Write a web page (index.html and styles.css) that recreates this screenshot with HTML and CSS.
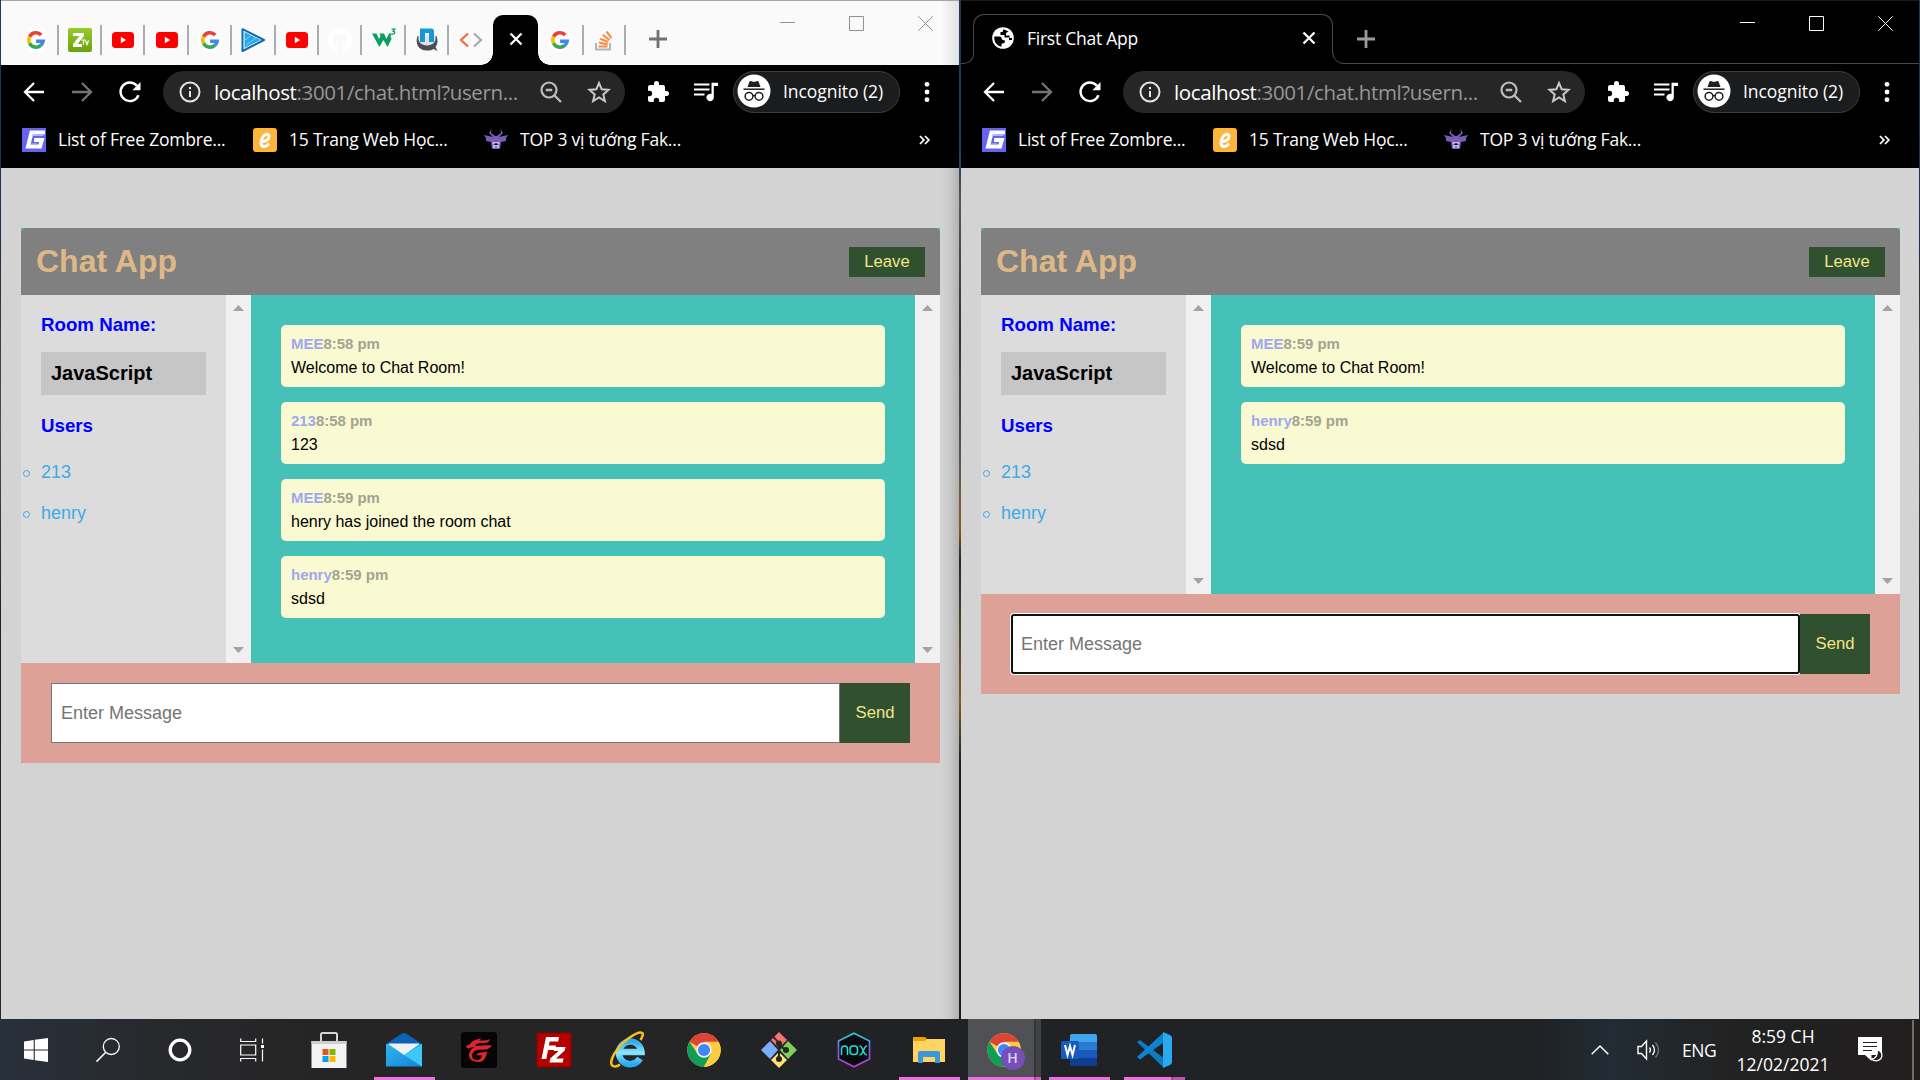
FILE: index.html
```html
<!DOCTYPE html>
<html lang="vi">
<head>
<meta charset="utf-8">
<title>First Chat App</title>
<link rel="stylesheet" href="styles.css">
</head>
<body>
<svg class="sprite" aria-hidden="true">
  <defs>
    <linearGradient id="g-ie" x1="0" y1="0" x2="0" y2="1"><stop offset="0" stop-color="#35a9e8"/><stop offset=".5" stop-color="#8be6fd"/><stop offset="1" stop-color="#27aaf0"/></linearGradient>
    <linearGradient id="g-nox" x1="0" y1="0" x2="0" y2="1"><stop offset="0" stop-color="#22d6cf"/><stop offset=".5" stop-color="#7b5be0"/><stop offset="1" stop-color="#c23bd8"/></linearGradient>
    <linearGradient id="g-mail" x1="0" y1="0" x2="1" y2="1"><stop offset="0" stop-color="#2fb4ee"/><stop offset="1" stop-color="#1484d8"/></linearGradient>
    <linearGradient id="g-z" x1="0" y1="0" x2="0" y2="1"><stop offset="0" stop-color="#9aca28"/><stop offset="1" stop-color="#6aa312"/></linearGradient>
  </defs>
  <symbol id="google" viewBox="0 0 24 24">
    <circle cx="12" cy="12" r="12" fill="#fff"/>
    <g fill="none" stroke-width="3.6"><path d="M17.2 6.9A7.2 7.2 0 0 0 5.6 8.7" stroke="#ea4335"/><path d="M5.6 8.7a7.2 7.2 0 0 0 0 6.6" stroke="#fbbc05"/><path d="M5.6 15.3a7.2 7.2 0 0 0 11.2 2.1" stroke="#34a853"/><path d="M16.8 17.4a7 7 0 0 0 2.3-4.1h-7" stroke="#4285f4"/></g>
  </symbol>
  <symbol id="zing" viewBox="0 0 24 24">
    <rect width="24" height="24" rx="2" fill="url(#g-z)"/>
    <path d="M5 5h11v3L9.500 16H14v3H5v-3L11.500 8H5z" fill="#fff"/>
    <path d="M13.500 12h4M15.500 12v4.500M17.500 12.500l1.500 4 1.500-4" stroke="#fff" stroke-width="1.200" fill="none"/>
  </symbol>
  <symbol id="youtube" viewBox="0 0 24 24"><rect x="1" y="4" width="22" height="16" rx="3.500" fill="#f00"/><path d="M9.800 8.800v6.400l5.400-3.200z" fill="#fff"/></symbol>
  <symbol id="play" viewBox="0 0 24 24"><path d="M1.500 1.200 23 12 1.500 23z" fill="#fff" stroke="#0f69ae" stroke-width="2" stroke-linejoin="round"/><path d="M3.500 4 19.500 12 3.500 20z" fill="#28a8e8"/><path d="M4 12l6-4.500M5 17l10-7" stroke="#7fcdf3" stroke-width="1"/></symbol>
  <symbol id="github" viewBox="0 0 24 24"><path fill="#fff" d="M12 .3a12 12 0 0 0-3.800 23.400c.6.100.8-.3.800-.6v-2.200c-3.300.7-4-1.400-4-1.400-.6-1.400-1.400-1.800-1.400-1.800-1-.7.100-.7.100-.7 1.200.1 1.900 1.200 1.900 1.200 1 1.800 2.800 1.300 3.500 1 .1-.8.4-1.300.8-1.600-2.700-.3-5.500-1.300-5.500-6 0-1.200.5-2.300 1.300-3.100-.2-.4-.6-1.600 0-3.200 0 0 1-.3 3.400 1.200a11.500 11.500 0 0 1 6 0c2.300-1.500 3.300-1.200 3.300-1.200.6 1.600.2 2.800.1 3.200.8.800 1.200 1.900 1.200 3.200 0 4.600-2.800 5.600-5.500 5.900.5.400.9 1.100.9 2.200v3.300c0 .3.100.7.800.6A12 12 0 0 0 12 .3"/></symbol>
  <symbol id="w3" viewBox="0 0 24 24"><path d="M0 5.500h4.500L7 11l1.500-3-1-2.500H12l2.500 5.500L17 5.500h2.500l-1 3 1 2.500-4 8-4-7-4.200 7z" fill="#0b9d63"/><path d="M19.500 1.200h3.300l-1.600 2c2.600.2 2 3.600-1.900 2.700" fill="none" stroke="#0b9d63" stroke-width="1.300"/></symbol>
  <symbol id="nbubble" viewBox="0 0 24 24"><path d="M2.500 8C0 15 3 22.500 12 22.500c3 0 4.500-.5 6.500-1.500l4 2-2-4c2.500-3 2.500-7 1-11" fill="#4a4e52"/><path d="M3.500 8c-1 6 3 9.500 8.500 9.500S21.500 14 20.500 8" fill="#dfe3e6"/><path d="M5 .5h11q3 0 3 3V14h-5V5h-4v9H5z" fill="#1697d8"/></symbol>
  <symbol id="angles" viewBox="0 0 24 24"><path d="M9 5.500 2 12l7 6.500" fill="none" stroke="#ee6b42" stroke-width="2.200"/><path d="M15 5.500 22 12l-7 6.500" fill="none" stroke="#a9aaab" stroke-width="2.200"/></symbol>
  <symbol id="overflow" viewBox="0 0 24 24"><path d="M4 15v6.500h14V15" fill="none" stroke="#b0b5ba" stroke-width="2"/><path d="M6.500 18.500h9M7 14.700l8.700 1.600M8.200 10.700l8.200 3.300M10.800 6.800l6.700 5.200M14.500 3.500l5 6.700" stroke="#f6914a" stroke-width="2.200"/></symbol>
  <symbol id="cross" viewBox="0 0 24 24"><path d="m6.500 6.500 11 11m0-11-11 11" stroke="currentColor" stroke-width="2.300"/></symbol>
  <symbol id="plus" viewBox="0 0 24 24"><path d="M12 3v18M3 12h18" stroke="currentColor" stroke-width="2.800"/></symbol>
  <symbol id="globe" viewBox="0 0 24 24"><circle cx="12" cy="12" r="10.800" fill="#fff"/><path d="M3.300 10.500h5.200q2 0 2 1.800t2 1.700q1.500 0 1.500 1.500T12 17.500h-1.500v3.300Q4 19 3.300 13zM12.500 3.200l-1 2.800h-2v3h4v2.500h4.500v2.500h3v-2h-2.500V9.500H15V7l2.500-1.500" fill="#000"/></symbol>
  <symbol id="back" viewBox="0 0 24 24"><path d="M22 12H3.500M12 3l-9 9 9 9" fill="none" stroke="currentColor" stroke-width="2.300"/></symbol>
  <symbol id="reload" viewBox="0 0 24 24"><path d="M20.500 15.200A9.300 9.300 0 1 1 18.800 5.600" fill="none" stroke="#fff" stroke-width="2.400"/><path d="M22.500 2v8.200h-8.200z" fill="#fff"/></symbol>
  <symbol id="info" viewBox="0 0 24 24"><circle cx="12" cy="12" r="9.500" fill="none" stroke="#e4e4e4" stroke-width="2"/><path d="M12 11v6M12 7v2.200" stroke="#e4e4e4" stroke-width="2"/></symbol>
  <symbol id="zoomout" viewBox="0 0 24 24"><circle cx="10" cy="10" r="7.500" fill="none" stroke="#bdbdbd" stroke-width="2.200"/><path d="M6.800 10h6.400M15.500 15.500l6.500 6.500" stroke="#bdbdbd" stroke-width="2.300"/></symbol>
  <symbol id="star" viewBox="0 0 24 24"><path d="m12 3 2.700 6.300 6.800.6-5.200 4.500 1.600 6.700-5.900-3.600-5.900 3.600 1.600-6.700-5.200-4.500 6.800-.6z" fill="none" stroke="#c9c9c9" stroke-width="2"/></symbol>
  <symbol id="puzzle" viewBox="0 0 24 24"><path fill="#fff" d="M20.500 11H19V7a2 2 0 0 0-2-2h-4V3.500a2.500 2.500 0 0 0-5 0V5H4a2 2 0 0 0-2 2v3.800h1.500a2.700 2.700 0 0 1 0 5.400H2V20c0 1.100.9 2 2 2h3.800v-1.500a2.700 2.700 0 0 1 5.400 0V22H17a2 2 0 0 0 2-2v-4h1.500a2.500 2.500 0 0 0 0-5z"/></symbol>
  <symbol id="queue" viewBox="0 0 24 24"><path d="M0 4.500h15.500M0 9.500h15.500M0 14.500h10.500" stroke="#fff" stroke-width="2.200"/><path d="M24 2.800h-6.500v11.300a3.700 3.700 0 1 0 2.300 3.400V6H24z" fill="#fff"/></symbol>
  <symbol id="incognito" viewBox="0 0 34 34"><circle cx="17" cy="17" r="16.500" fill="#fff"/><path d="M12.500 7.500c1-1.500 3 .4 4.500.4s3.500-1.900 4.500-.4L23.500 13h-13z" fill="#202124"/><path d="M6.500 15.200h21" stroke="#202124" stroke-width="1.500"/><g fill="none" stroke="#202124" stroke-width="1.500"><circle cx="12" cy="22.300" r="3.900"/><circle cx="22" cy="22.300" r="3.900"/><path d="M16 22c.6-.6 1.400-.6 2 0"/></g></symbol>
  <symbol id="dots" viewBox="0 0 24 24"><g fill="#fff"><circle cx="12" cy="4.300" r="2.400"/><circle cx="12" cy="12" r="2.400"/><circle cx="12" cy="19.700" r="2.400"/></g></symbol>
  <symbol id="bm-g" viewBox="0 0 24 24"><path d="M0 0h24v24H0z" fill="#6763f2"/><path d="M23 4.500H9.500L6 18.500h12l1.800-6.500H12" fill="none" stroke="#fff" stroke-width="4"/><path d="M10 7.500h11.500M9 16h6" stroke="#b9b8e8" stroke-width="1.200"/></symbol>
  <symbol id="bm-e" viewBox="0 0 24 24"><rect width="24" height="24" rx="3" fill="#ffb43c"/><path d="M8 13.500c5.500 0 8-2.500 8-5 0-3-4-3-6.200.5C7 13 7.500 18.500 11 18.500c2.300 0 4-1.500 5-3" fill="none" stroke="#fff" stroke-width="3"/></symbol>
  <symbol id="bm-o" viewBox="0 0 24 24"><path d="M7.500 1 5 5l4 4-9-2 2 3v3l5 1 1 7h8l1-7 5-1v-3l2-3-9 2 4-4-2.500-4 .5 4-4 3h-2L7 5z" fill="#7a5db2"/><path d="M8.500 14h7l-.5 6H9z" fill="#cdb9ec"/><path d="m9.500 17 2.500-2 2.500 2M11 19h2" stroke="#4d347b"/></symbol>
  <symbol id="c-min" viewBox="0 0 15 15"><path d="M0 6.500h15" stroke="currentColor"/></symbol>
  <symbol id="c-max" viewBox="0 0 15 15"><path d="M.5.500h14v14H.500z" fill="none" stroke="currentColor"/></symbol>
  <symbol id="c-close" viewBox="0 0 15 15"><path d="m.3.300 14.400 14.400m0-14.400L.3 14.700" stroke="currentColor"/></symbol>
  <symbol id="chrome" viewBox="0 0 34 34"><circle cx="17" cy="17" r="16.700" fill="#ffcd40"/><path d="M17 17 2.500 8.700A16.700 16.700 0 0 1 31.500 8.700z" fill="#db4437"/><path d="M2.500 8.700A16.700 16.700 0 0 0 17 33.700l7-13L10 20z" fill="#0f9d58"/><path d="M17 8.700h14.500A16.700 16.700 0 0 1 17 33.700l7-12.500z" fill="#ffcd40"/><circle cx="17" cy="17" r="7.700" fill="#f1f1f1"/><circle cx="17" cy="17" r="6.100" fill="#4285f4"/></symbol>
</svg>

<main class="desktop">
  <section class="window">
    <header class="tabs tabs-light">
      <div class="tab"><svg><use href="#google"/></svg></div>
      <div class="tab"><svg><use href="#zing"/></svg></div>
      <div class="tab"><svg><use href="#youtube"/></svg></div>
      <div class="tab"><svg><use href="#youtube"/></svg></div>
      <div class="tab"><svg><use href="#google"/></svg></div>
      <div class="tab"><svg><use href="#play"/></svg></div>
      <div class="tab"><svg><use href="#youtube"/></svg></div>
      <div class="tab"><svg><use href="#github"/></svg></div>
      <div class="tab"><svg><use href="#w3"/></svg></div>
      <div class="tab"><svg><use href="#nbubble"/></svg></div>
      <div class="tab tab-last"><svg><use href="#angles"/></svg></div>
      <div class="tab-active"><svg><use href="#cross"/></svg></div>
      <div class="tab tab-after"><svg><use href="#google"/></svg></div>
      <div class="tab tab-narrow"><svg><use href="#overflow"/></svg></div>
      <svg class="new-tab"><use href="#plus"/></svg>
      <div class="controls"><svg><use href="#c-min"/></svg><svg><use href="#c-max"/></svg><svg><use href="#c-close"/></svg></div>
    </header>
    <nav class="toolbar">
      <svg class="nav-icon"><use href="#back"/></svg>
      <svg class="nav-icon forward"><use href="#back"/></svg>
      <svg class="nav-icon"><use href="#reload"/></svg>
      <div class="omnibox"><svg><use href="#info"/></svg><span class="url"><b>localhost</b>:3001/chat.html?usern...</span><svg><use href="#zoomout"/></svg><svg class="star"><use href="#star"/></svg></div>
      <svg class="tool puzzle"><use href="#puzzle"/></svg>
      <svg class="tool queue"><use href="#queue"/></svg>
      <div class="pill"><svg><use href="#incognito"/></svg><span>Incognito (2)</span></div>
      <svg class="tool dots"><use href="#dots"/></svg>
    </nav>
    <nav class="bookmarks">
      <a class="bm bm-1"><svg><use href="#bm-g"/></svg><span>List of Free Zombre...</span></a>
      <a class="bm bm-2"><svg><use href="#bm-e"/></svg><span>15 Trang Web Học...</span></a>
      <a class="bm bm-3"><svg><use href="#bm-o"/></svg><span>TOP 3 vị tướng Fak...</span></a>
      <svg class="more" viewBox="0 0 11 10"><path d="m1 1 3.800 4L1 9m5-8 3.800 4L6 9" fill="none" stroke="#fff" stroke-width="1.800"/></svg>
    </nav>
    <div class="page page-shaded">
      <div class="chat">
        <header class="chat-head"><h1>Chat App</h1><a class="btn leave">Leave</a></header>
        <div class="chat-main tall">
          <aside class="side">
            <h3>Room Name:</h3><h2>JavaScript</h2><h3 class="users-title">Users</h3>
            <ul><li>213</li><li>henry</li></ul>
          </aside>
          <div class="scroll"><i class="up"></i><i class="down"></i></div>
          <div class="messages">
            <div class="msg"><p class="meta">MEE<span>8:58 pm</span></p><p>Welcome to Chat Room!</p></div>
            <div class="msg"><p class="meta">213<span>8:58 pm</span></p><p>123</p></div>
            <div class="msg"><p class="meta">MEE<span>8:59 pm</span></p><p>henry has joined the room chat</p></div>
            <div class="msg"><p class="meta">henry<span>8:59 pm</span></p><p>sdsd</p></div>
          </div>
          <div class="scroll"><i class="up"></i><i class="down"></i></div>
        </div>
        <form class="chat-form"><input type="text" placeholder="Enter Message"><button type="button" class="btn send">Send</button></form>
      </div>
    </div>
  </section>
  <div class="divider"></div>
  <section class="window">
    <header class="tabs tabs-dark">
      <div class="strip-start"></div>
      <div class="tab-wide"><svg><use href="#globe"/></svg><span>First Chat App</span><svg class="x"><use href="#cross"/></svg></div>
      <div class="strip-rest"><svg class="new-tab"><use href="#plus"/></svg>
      <div class="controls"><svg><use href="#c-min"/></svg><svg><use href="#c-max"/></svg><svg><use href="#c-close"/></svg></div></div>
    </header>
    <nav class="toolbar">
      <svg class="nav-icon"><use href="#back"/></svg>
      <svg class="nav-icon forward"><use href="#back"/></svg>
      <svg class="nav-icon"><use href="#reload"/></svg>
      <div class="omnibox"><svg><use href="#info"/></svg><span class="url"><b>localhost</b>:3001/chat.html?usern...</span><svg><use href="#zoomout"/></svg><svg class="star"><use href="#star"/></svg></div>
      <svg class="tool puzzle"><use href="#puzzle"/></svg>
      <svg class="tool queue"><use href="#queue"/></svg>
      <div class="pill"><svg><use href="#incognito"/></svg><span>Incognito (2)</span></div>
      <svg class="tool dots"><use href="#dots"/></svg>
    </nav>
    <nav class="bookmarks">
      <a class="bm bm-1"><svg><use href="#bm-g"/></svg><span>List of Free Zombre...</span></a>
      <a class="bm bm-2"><svg><use href="#bm-e"/></svg><span>15 Trang Web Học...</span></a>
      <a class="bm bm-3"><svg><use href="#bm-o"/></svg><span>TOP 3 vị tướng Fak...</span></a>
      <svg class="more" viewBox="0 0 11 10"><path d="m1 1 3.800 4L1 9m5-8 3.800 4L6 9" fill="none" stroke="#fff" stroke-width="1.800"/></svg>
    </nav>
    <div class="page">
      <div class="chat">
        <header class="chat-head"><h1>Chat App</h1><a class="btn leave">Leave</a></header>
        <div class="chat-main short">
          <aside class="side">
            <h3>Room Name:</h3><h2>JavaScript</h2><h3 class="users-title">Users</h3>
            <ul><li>213</li><li>henry</li></ul>
          </aside>
          <div class="scroll"><i class="up"></i><i class="down"></i></div>
          <div class="messages">
            <div class="msg"><p class="meta">MEE<span>8:59 pm</span></p><p>Welcome to Chat Room!</p></div>
            <div class="msg"><p class="meta">henry<span>8:59 pm</span></p><p>sdsd</p></div>
          </div>
          <div class="scroll"><i class="up"></i><i class="down"></i></div>
        </div>
        <form class="chat-form"><input class="focused" type="text" placeholder="Enter Message"><button type="button" class="btn send">Send</button></form>
      </div>
    </div>
  </section>
</main>

<footer class="taskbar">
  <div class="sys"><svg viewBox="0 0 24 24" class="s24"><path d="M0 3.400 9.700 2v9.500H0zM10.800 1.800 24 0v11.500H10.800zM0 12.500h9.700V22L0 20.600zM10.800 12.500H24V24l-13.200-1.800z" fill="#fff"/></svg></div>
  <div class="sys"><svg viewBox="0 0 24 24" class="s24"><circle cx="15.300" cy="8.500" r="8" fill="none" stroke="#fff" stroke-width="1.300"/><path d="M9.800 14.300.500 23.600" stroke="#fff" stroke-width="1.500"/></svg></div>
  <div class="sys"><svg viewBox="0 0 24 24" class="s24"><circle cx="12" cy="12" r="9.800" fill="none" stroke="#fff" stroke-width="3.300"/></svg></div>
  <div class="sys"><svg viewBox="0 0 24 24" class="s24"><path d="M.700.500v3h15v-3M.700 7h15v10h-15zM.700 23.500v-3h15v3M22.500.500v5M22.500 11.500v12" fill="none" stroke="#fff" stroke-width="1.200"/><path d="M21 7h3v3h-3z" fill="#fff"/></svg></div>
  <div class="apps">
    <div class="app"><svg viewBox="0 0 36 36"><path d="M10 12V2.500Q10 1 11.500 1h13Q26 1 26 2.500V12" fill="none" stroke="#d5d5d5" stroke-width="2"/><path d="M.5 9h35v27H.500z" fill="#f3f3f3"/><path d="M.5 9h35v3H.500z" fill="#cfcfcf"/><path d="M11.500 17h6v6h-6z" fill="#f25022"/><path d="M18.500 17h6v6h-6z" fill="#7fba00"/><path d="M11.500 24h6v6h-6z" fill="#00a4ef"/><path d="M18.500 24h6v6h-6z" fill="#ffb900"/></svg></div>
    <div class="app open"><svg viewBox="0 0 36 36"><path d="M0 12 16 1.500q2-1 4 0L36 12z" fill="#0d62b8"/><path d="M0 12h36v22.500H0z" fill="url(#g-mail)"/><path d="M36 12v22.500L18 23z" fill="#3cc8f8"/><path d="M3 11.500h30v1L18 23 3 12.500z" fill="#f0f1f3"/></svg></div>
    <div class="app"><svg viewBox="0 0 36 36"><rect width="36" height="36" rx="3" fill="#050505"/><path d="M5 14c4-1 4-3 7-5 3-1.500 6-2 9-3l-3 2.500h5c2 0 4-.5 6-1.500-1 3-3 4-6 4-4 0-7 0-9 2.500 5 1 10-1 17 0-2 2-3 3.500-6 4-5 .5-11-1-13.500 4-1.500 4 1.500 7 5 6.500 3-.5 5-3 4-5l-5 .5 1-2c3-1.500 7-1 10-2-2 6-3 10.500-9 10.500-7 0-11-4-9-9.500 1-3 3-4 5-5.500-3 0-4 1-6 1.500-1 0-2-1-2.500-2z" fill="#df242c"/></svg></div>
    <div class="app"><svg viewBox="0 0 36 36"><rect x="1" y="1" width="34" height="34" fill="#b40000" stroke="#8d0000" stroke-width="2" stroke-dasharray="2 2"/><path d="m5.500 27 4.500-22h13l-.8 4.500h-8.500l-.8 4h7l-.8 4.500h-7l-1.800 9z" fill="#fff"/><path d="M18.500 15h11l-.7 3.500-8.800 8h7.500l-.7 4H13.500l.700-4 8.300-7.500H17.800z" fill="#fff"/></svg></div>
    <div class="app"><svg viewBox="0 0 36 36"><path d="M29 26.500A11.300 11.300 0 1 1 30.500 20H10" fill="none" stroke="url(#g-ie)" stroke-width="6.500"/><path d="M29.500 8C36-2 28-1 18 6 6 14-4 31 2 34c2 1 5 0 7-1.500" fill="none" stroke="#f5c11c" stroke-width="2.500"/></svg></div>
    <div class="app"><svg class="s34"><use href="#chrome"/></svg></div>
    <div class="app"><svg viewBox="0 0 36 36"><path d="m18 0 8 8-8 8-8-8z" fill="#f77470"/><path d="m9 9 8 9-8 9-9-9z" fill="#7aaefc"/><path d="m27 9 9 9-9 9-8-9z" fill="#80cf55"/><path d="m18 20 8 8-8 8-8-8z" fill="#ffe179"/><g fill="#262626"><path d="m12 3 7 8h-2l-7-7zM17 10h2v18h-2zM18 11l8 7-1 2-8-7z"/><circle cx="18" cy="11.500" r="3"/><circle cx="18" cy="27" r="3"/><circle cx="25" cy="18" r="3"/></g></svg></div>
    <div class="app"><svg viewBox="0 0 36 36"><path d="M18 1.200 33.500 9v18L18 34.800 2.500 27V9z" fill="#0b0c0f" stroke="url(#g-nox)" stroke-width="1.700"/><g fill="none" stroke="#1fe0d2" stroke-width="1.500"><path d="M5.500 23v-6q0-3 3-3t3 3v6"/><rect x="14" y="14" width="7.500" height="8.500" rx="3"/><path d="M23.500 14c4 0 3 9 7.500 9m0-9c-4 0-3 9-7.500 9"/></g></svg></div>
    <div class="app open"><svg viewBox="0 0 36 36"><path d="M2 5h12l2 2v5H2z" fill="#e7a20a"/><path d="M2 9h12l2-2h18v23H2z" fill="#ffd560"/><path d="M7 31V21q0-2 2-2h18q2 0 2 2v10h-5v-6H12v6z" fill="#3a96dd"/></svg></div>
    <div class="app current"><svg class="s34"><use href="#chrome"/></svg><b class="badge">H</b></div>
    <div class="app open"><svg viewBox="0 0 36 36"><path d="M9 4q0-2 2-2h23q2 0 2 2v6H9z" fill="#41a5ee"/><path d="M9 10h27v8H9z" fill="#2b7cd3"/><path d="M9 18h27v8H9z" fill="#185abd"/><path d="M9 26h27v6q0 2-2 2H11q-2 0-2-2z" fill="#103f91"/><rect y="9" width="18" height="18" rx="1.500" fill="#185abd"/><path d="m4 13 2.500 10L9 14l2.500 9L14 13" fill="none" stroke="#fff" stroke-width="2"/></svg></div>
    <div class="app open stacked"><svg viewBox="0 0 36 36"><path d="m1 10 3-2 23 17.500v9.500z" fill="#0d7ac4"/><path d="m1 25 3 2.500L27 11V1z" fill="#0a83d0"/><path d="m27 0 7 3q2 1 2 3v24q0 2-2 3l-7 3z" fill="#2aa9f0"/></svg></div>
  </div>
  <div class="tray">
    <svg class="chev" viewBox="0 0 18 10"><path d="m.7 9.300 8.300-8.300 8.300 8.300" fill="none" stroke="#fff" stroke-width="1.500"/></svg>
    <svg class="vol" viewBox="0 0 23 20"><path d="M1 6.500h3.500L9.500 1v18l-5-5.500H1z" fill="none" stroke="#fff" stroke-width="1.400"/><path d="M12.500 7.500q2 2.500 0 5M15.500 5q4 5 0 10" fill="none" stroke="#fff" stroke-width="1.300"/><path d="M18.500 2.500q6 7.500 0 15" fill="none" stroke="#777" stroke-width="1.300"/></svg>
    <span class="lang">ENG</span>
    <div class="clock"><span>8:59 CH</span><span class="date">12/02/2021</span></div>
    <svg class="note" viewBox="0 0 25 25"><path d="M0 0h24v18H13.500v6L7 18H0z" fill="#fff"/><path d="M5 5.500h14M5 9.500h14M5 13.500h9" stroke="#222" stroke-width="1.200"/><path d="M19 12.500c5 1 6 6 4 9-2.500 3-7 3-9.500.5 5-.5 6.500-5 5.500-9.500z" fill="#222" stroke="#fff" stroke-width="1.300"/></svg>
    <div class="show-desktop"></div>
  </div>
</footer>
</body>
</html>
```
FILE: styles.css
```css
*, *::before, *::after { box-sizing: border-box; }
html, body { margin: 0; width: 1920px; height: 1080px; overflow: hidden; background: #1f2225; }
h1, h2, h3, p, ul { margin: 0; padding: 0; font-size: inherit; }
body { font-family: "Open Sans", "Noto Sans", sans-serif; }
svg { display: block; flex: none; overflow: visible; }
.sprite { position: absolute; width: 0; height: 0; }

.desktop { display: flex; height: 1019px; padding: 0 1px; background: linear-gradient(#1d3a5b, #1f3044 25%, #5a4a3c 42%, #20202c 60%, #1d2a38); }
.window { width: 958px; display: flex; flex-direction: column; }
.divider { width: 2px; background: linear-gradient(#26384b, #1f4059 15%, #55585c 20%, #2c3340 33%, #6f5b49 48%, #8a5b12 52%, #24262c 55%, #806018 69%, #1c1d22 75%); }

/* tab strips */
.tabs { height: 65px; display: flex; color: #fff; }
.tabs-light { background: linear-gradient(90deg, transparent 940px, rgba(0,0,0,.1)), #fafafa; border-top: 1px solid #a6a4a4; padding-left: 14.200px; }
.tab { width: 43.400px; height: 30px; margin-top: 24px; display: flex; align-items: center; justify-content: center; border-right: 2px solid #adadad; }
.tab svg, .tab-active svg { width: 24px; height: 24px; }
.tab svg { margin: -1px -1px 0 0; }
.tab-last { border: 0; }
.tab-active { position: relative; width: 44.500px; height: 50px; margin: 14px 0 0 1px; background: #000; border-radius: 10px 10px 0 0; display: flex; justify-content: center; padding-top: 12px; }
.tab-active::before, .tab-active::after { content: ""; position: absolute; bottom: 0; width: 12px; height: 12px; }
.tab-active::before { right: 100%; background: radial-gradient(circle at 0 0, transparent 11.500px, #000 12px); }
.tab-active::after { left: 100%; background: radial-gradient(circle at 100% 0, transparent 11.500px, #000 12px); }
.tab-after { width: 46px; }
.tab-narrow { width: 42px; }
.new-tab { width: 24px; height: 24px; }
.tabs-light .new-tab { margin: 26px 0 0 20px; color: #6f7174; }
.controls { margin: 15px 26px 0 auto; display: flex; gap: 54px; }
.controls svg { width: 15px; height: 15px; }
.tabs-light .controls { color: #919191; }
.tabs-dark { background: #000; border-top: 1px solid #1a1a1a; }
.strip-start { width: 13px; height: 63px; border-bottom: 1px solid #484848; border-right: 1px solid #484848; border-bottom-right-radius: 10px; clip-path: inset(42px 0 0 0); }
.tab-wide { width: 360px; height: 40px; margin: 13px 0 0 -1px; padding: 10px 11px 3px 17px; border: 1px solid #484848; border-bottom: 0; border-radius: 11px 11px 0 0; display: flex; align-items: center; font-size: 17.500px; letter-spacing: -.25px; }
.tab-wide svg { width: 24px; height: 24px; }
.tab-wide span { margin-left: 12px; flex: 1; white-space: nowrap; }
.strip-rest { flex: 1; height: 63px; margin-left: -1px; display: flex; border-bottom: 1px solid #484848; position: relative; border-bottom-left-radius: 12px; }
.strip-rest::before { content: ""; position: absolute; left: 0; bottom: 0; width: 12px; height: 12px; border-left: 1px solid #484848; border-bottom-left-radius: 12px; }
.strip-rest .new-tab { margin: 26px 0 0 22px; color: #9b9b9b; }

/* browser toolbar */
.toolbar { height: 55px; background: #000; display: flex; align-items: center; padding: 0 0 2px 21px; color: #fff; }
.nav-icon { width: 24px; height: 24px; margin-right: 24px; }
.forward { transform: scaleX(-1); color: #747474; }
.omnibox { width: 462px; height: 42px; margin-left: -3px; border-radius: 21px; background: #262626; display: flex; align-items: center; padding: 0 14px 0 15px; }
.omnibox svg { width: 24px; height: 24px; }
.url { flex: 1; margin-left: 12px; white-space: nowrap; font-size: 20.500px; letter-spacing: -.37px; color: #979797; }
.url b { font-weight: 400; color: #fff; }
.omnibox .star { margin-left: 24px; }
.tool { width: 24px; height: 24px; }
.puzzle { margin-left: 21px; }
.queue { margin-left: 24px; }
.pill { width: 167px; height: 42px; margin-left: 15px; border: 1px solid #3c3d40; border-radius: 21px; background: #1b1c1e; display: flex; align-items: center; padding: 0 0 1px 3px; font-size: 17.500px; letter-spacing: -.05px; white-space: nowrap; }
.pill svg { width: 34px; height: 34px; margin-right: 12px; }
.dots { margin-left: 15px; }
.bookmarks { height: 48px; background: #000; display: flex; align-items: center; padding: 0 29px 8px 21px; color: #fff; font-size: 17.500px; letter-spacing: -.22px; white-space: nowrap; }
.bm { display: flex; align-items: center; gap: 12px; }
.bm svg { width: 24px; height: 24px; }
.bm span { margin-top: -2px; }
.bm-1, .bm-2 { width: 231px; }
.more { width: 11px; height: 10px; margin: -1px 0 0 auto; }

/* chat page */
.page { flex: 1; background: #d3d3d3; padding: 60px 19px 0 20px; font-family: "Liberation Sans", Arial, sans-serif; }
.page-shaded { background: linear-gradient(90deg, transparent 940px, rgba(0,0,0,.04) 948px, rgba(0,0,0,.16)), #d3d3d3; }
.chat { background: #46c1b8; }
.chat-head { height: 67px; border-radius: 5px 5px 0 0; background: #808080; padding: 0 15px; display: flex; align-items: center; justify-content: space-between; }
.chat-head h1 { font-size: 32px; color: #deb887; line-height: 67px; }
.btn { background: #305030; color: #f0e68c; border: 0; font-family: inherit; font-size: 16.670px; display: flex; align-items: center; justify-content: center; }
.leave { width: 76px; height: 30px; margin-top: 1px; padding-bottom: 1px; }
.chat-main { display: flex; }
.tall { height: 368px; }
.short { height: 299px; }
.side { width: 205px; background: #dcdcdc; padding: 19px 20px 0; }
.side h3 { font-size: 18.720px; line-height: 22px; color: #00f; }
.side h2 { margin: 16px 0 20px; height: 43px; line-height: 43px; padding-left: 10px; font-size: 20px; background: #c6c6c6; }
.side ul { margin-top: 15px; list-style: none; color: #3cabe6; font-size: 18px; }
.side li { height: 41px; display: flex; align-items: center; }
.side li::before { content: ""; width: 7px; height: 7px; margin: 2px 11px 0 -18px; border: 1px solid; border-radius: 50%; }
.scroll { width: 25px; background: #f0f0f0; display: flex; flex-direction: column; justify-content: space-between; align-items: center; padding: 10px 0; }
.scroll i { width: 11px; height: 6px; background: #a3a3a3; }
.up { clip-path: polygon(50% 0, 100% 100%, 0 100%); }
.down { clip-path: polygon(0 0, 100% 0, 50% 100%); }
.messages { flex: 1; padding: 30px; display: flex; flex-direction: column; gap: 15px; font-size: 16px; }
.msg { height: 62px; padding: 8px 10px 0; border-radius: 5px; background: #fafad2; line-height: 26px; }
.meta { font-size: 15px; font-weight: 700; line-height: 22px; letter-spacing: -.03px; color: #9fa8ee; }
.meta span { color: #a3a392; }
.chat-form { height: 100px; padding: 20px 30px; background: #dea197; display: flex; }
.chat-form input { flex: 1; border: 1px solid #767676; border-radius: 0; padding: 0 0 0 9px; font: 18px "Liberation Sans", Arial, sans-serif; outline: 0; background: #fff; }
.chat-form input::placeholder { color: #757575; opacity: 1; }
.chat-form .focused { border: 2px solid #101010; border-radius: 3px; padding-left: 8px; box-shadow: 0 0 0 1px #fff; }
.send { width: 70px; padding: 0 0 1px; }

/* taskbar */
.taskbar { height: 61px; display: flex; background: linear-gradient(90deg, #28303b, #28292d 8%, #252525 16%, #252525 34%, #202225 42%, #1f2225 80%, #222c34 84%, #222222 90%, #211e1e); color: #fff; }
.sys { width: 72px; display: flex; align-items: center; justify-content: center; padding-bottom: 0; }
.s24 { width: 24px; height: 24px; }
.apps { display: flex; margin-left: 3.500px; }
.app { position: relative; width: 75px; display: flex; align-items: center; justify-content: center; }
.app svg { width: 36px; height: 36px; }
.app .s34 { width: 34px; height: 34px; }
.open::after, .current::after { content: ""; position: absolute; bottom: 0; left: 7px; width: 61px; height: 3px; background: #f06fe0; }
.current { background: linear-gradient(90deg, transparent 1.500px, #505154 1.500px 67px, #34363a 67px 69.500px, #404246 69.500px 74px, transparent 74px); }
.current::after { left: 1px; width: 73px; background: linear-gradient(90deg, #f06fe0 66px, #a94b9d 66px 68px, #d05fc2 68px); }
.stacked::after { background: linear-gradient(90deg, #f06fe0 47px, #9c4a92 47px 49px, #bd55b0 49px); }
.badge { position: absolute; left: 34px; top: 27px; width: 24px; height: 24px; border-radius: 50%; background: #7650b8; color: #e2d5f5; font-size: 14px; line-height: 24px; text-align: center; font-weight: 600; }
.tray { margin-left: auto; display: flex; align-items: center; font-size: 17.500px; }
.chev { width: 18px; height: 10px; margin-right: 28px; }
.vol { width: 23px; height: 20px; margin-right: 22px; }
.lang { width: 55px; letter-spacing: -.4px; }
.clock { width: 92px; display: flex; flex-direction: column; align-items: center; line-height: 28px; white-space: nowrap; }
.note { width: 25px; height: 25px; margin-left: 29px; }
.show-desktop { width: 2px; height: 60px; margin: 1px 6px 0 29px; background: #6e6e6e; }
```
